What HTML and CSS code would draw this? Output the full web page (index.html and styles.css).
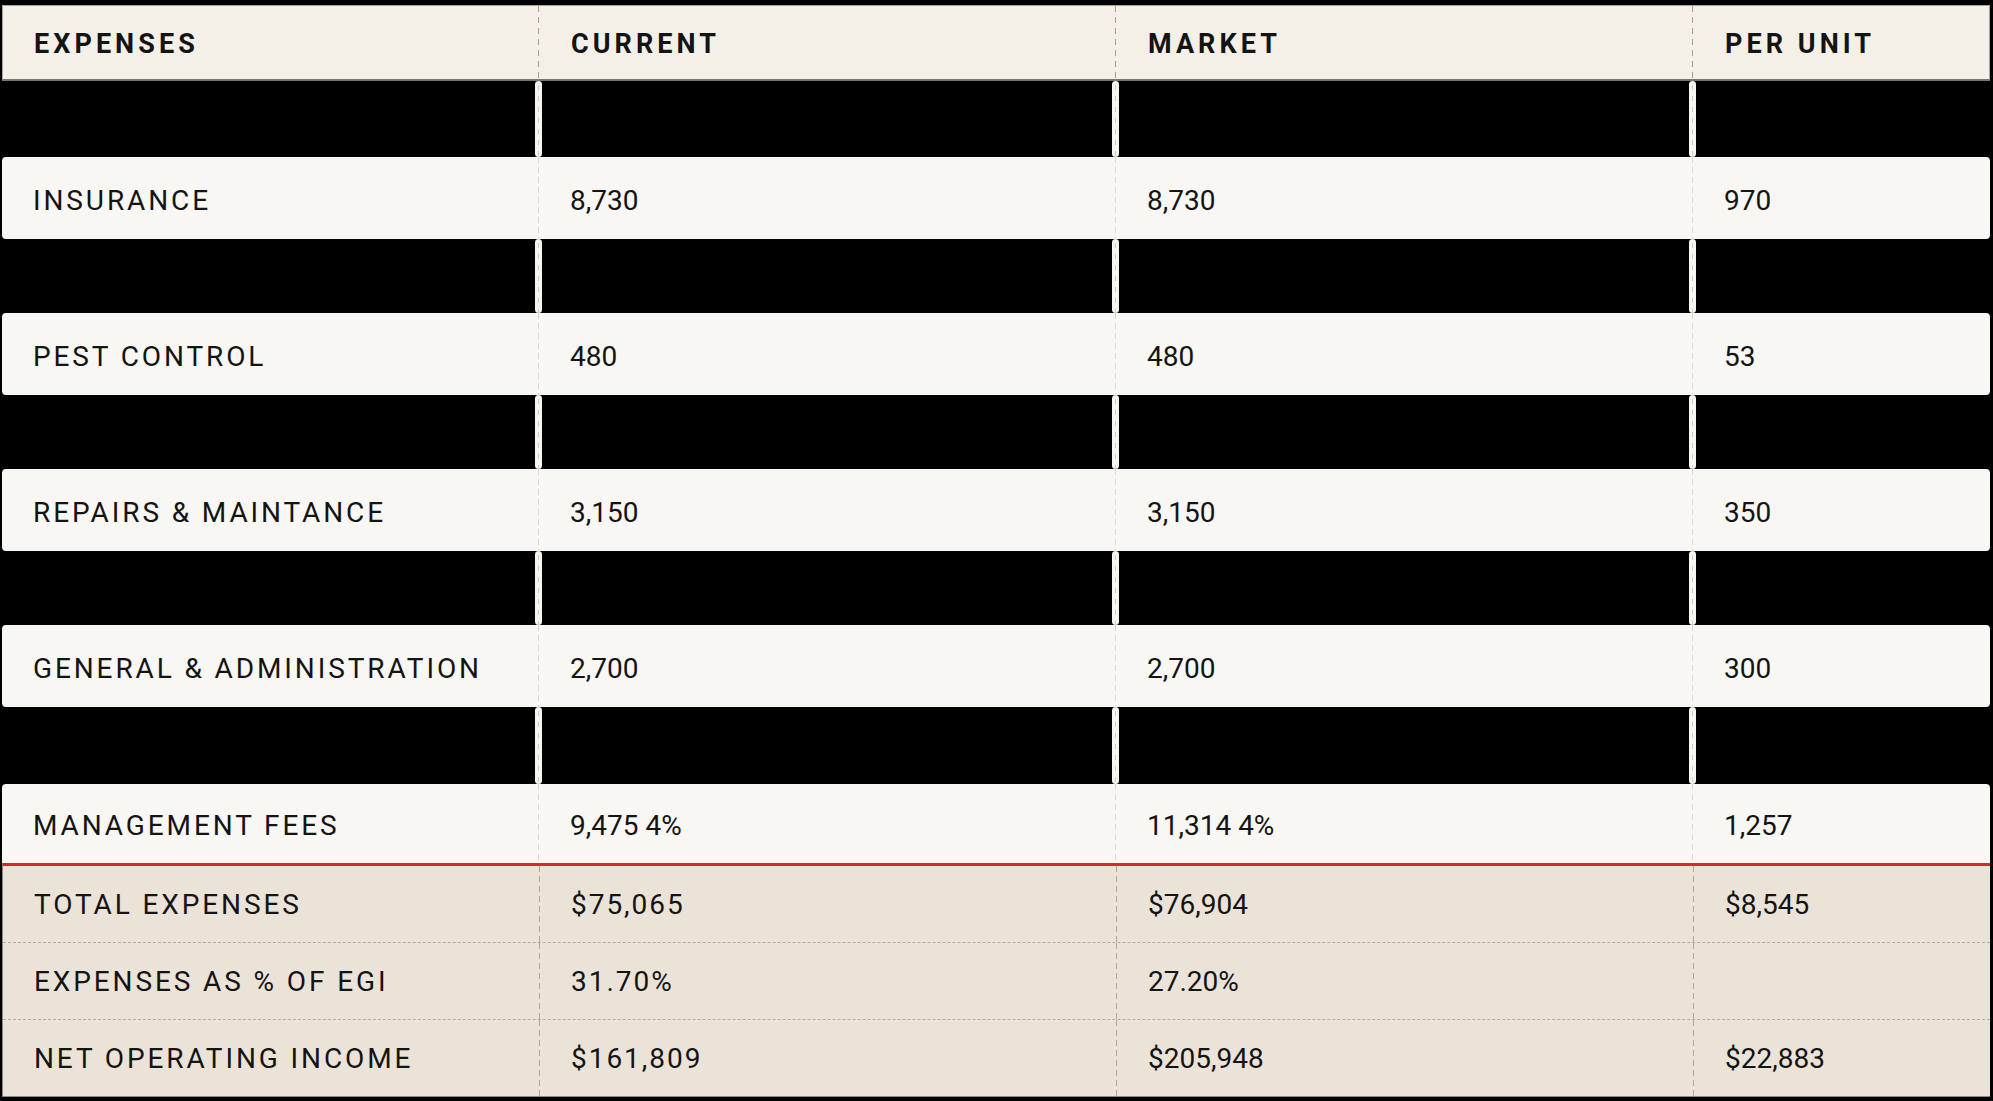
FILE: index.html
```html
<!DOCTYPE html>
<html lang="en">
<head>
<meta charset="utf-8">
<title>Expenses</title>
<link rel="stylesheet" href="styles.css">
</head>
<body>
<div class="sheet">
  <div class="row head">
    <div class="cell">EXPENSES</div>
    <div class="cell">CURRENT</div>
    <div class="cell">MARKET</div>
    <div class="cell">PER UNIT</div>
  </div>
  <div class="gap first"><div class="g"></div><div class="g"></div><div class="g"></div><div class="g"></div></div>
  <div class="row item">
    <div class="cell label">INSURANCE</div>
    <div class="cell">8,730</div>
    <div class="cell">8,730</div>
    <div class="cell">970</div>
  </div>
  <div class="gap"><div class="g"></div><div class="g"></div><div class="g"></div><div class="g"></div></div>
  <div class="row item">
    <div class="cell label">PEST CONTROL</div>
    <div class="cell">480</div>
    <div class="cell">480</div>
    <div class="cell">53</div>
  </div>
  <div class="gap"><div class="g"></div><div class="g"></div><div class="g"></div><div class="g"></div></div>
  <div class="row item">
    <div class="cell label">REPAIRS &amp; MAINTANCE</div>
    <div class="cell">3,150</div>
    <div class="cell">3,150</div>
    <div class="cell">350</div>
  </div>
  <div class="gap"><div class="g"></div><div class="g"></div><div class="g"></div><div class="g"></div></div>
  <div class="row item">
    <div class="cell label">GENERAL &amp; ADMINISTRATION</div>
    <div class="cell">2,700</div>
    <div class="cell">2,700</div>
    <div class="cell">300</div>
  </div>
  <div class="gap last"><div class="g"></div><div class="g"></div><div class="g"></div><div class="g"></div></div>
  <div class="row item mgmt">
    <div class="cell label">MANAGEMENT FEES</div>
    <div class="cell">9,475 4%</div>
    <div class="cell">11,314 4%</div>
    <div class="cell">1,257</div>
  </div>
  <div class="totals">
    <div class="row total">
      <div class="cell label">TOTAL EXPENSES</div>
      <div class="cell spaced">$75,065</div>
      <div class="cell">$76,904</div>
      <div class="cell">$8,545</div>
    </div>
    <div class="row total">
      <div class="cell label">EXPENSES AS % OF EGI</div>
      <div class="cell spaced">31.70%</div>
      <div class="cell">27.20%</div>
      <div class="cell"></div>
    </div>
    <div class="row total">
      <div class="cell label">NET OPERATING INCOME</div>
      <div class="cell spaced">$161,809</div>
      <div class="cell">$205,948</div>
      <div class="cell">$22,883</div>
    </div>
  </div>
</div>
</body>
</html>
```

FILE: styles.css
```css
* { box-sizing: border-box; }

html, body {
  margin: 0;
  background: #000;
}

body {
  font-family: Roboto, "Liberation Sans", sans-serif;
  color: #141414;
}

.sheet {
  margin: 5px 3px 5px 2px;
  display: flex;
  flex-direction: column;
}

.row,
.gap {
  display: grid;
  grid-template-columns: 536px 577px 577px 1fr;
}

.cell {
  position: relative;
  display: flex;
  align-items: center;
  padding: 4px 0 0 31px;
  font-size: 28px;
  white-space: nowrap;
}

.cell + .cell {
  padding-left: 32px;
}

.cell + .cell::before {
  content: "";
  position: absolute;
  left: 0;
  top: 0;
  bottom: 0;
  width: 1px;
  background: repeating-linear-gradient(to bottom, #dcd7cd 0 6px, transparent 6px 10px);
}

.label {
  letter-spacing: 0.103em;
}

.spaced {
  letter-spacing: 0.07em;
}

/* header */
.head {
  height: 76px;
  background: #f4f0e8;
  border: 1px solid #a8a39b;
  border-bottom: 2px solid #79746d;
}

.head .cell {
  font-size: 27px;
  font-weight: 700;
  letter-spacing: 0.15em;
  padding-top: 3px;
}

.head .cell + .cell::before {
  left: -1px;
  background: repeating-linear-gradient(to bottom, #a59d92 0 6px, transparent 6px 11px);
}

/* black spacer rows with divider bars */
.gap {
  height: 74px;
}

.gap.first {
  height: 76px;
}

.gap.last {
  height: 77px;
}

.g {
  position: relative;
}

.g + .g::before {
  content: "";
  position: absolute;
  left: -3px;
  top: 0;
  bottom: 0;
  width: 7px;
  border-radius: 4px;
  background: #f7f5f0;
}

.g + .g::after {
  content: "";
  position: absolute;
  left: 0;
  top: 4px;
  bottom: 0;
  width: 1px;
  background: repeating-linear-gradient(to bottom, #d6ccbc 0 5px, transparent 5px 11px);
}

/* white item rows */
.item {
  height: 82px;
  background: #f8f7f3;
  border-radius: 4px;
}

.mgmt {
  height: 79px;
  border-radius: 4px 4px 0 0;
}

/* totals */
.totals {
  border-top: 3px solid #d9272f;
  border-left: 1px solid #8d877f;
  border-bottom: 1px solid #8d877f;
  background: #ebe3d8;
}

.total {
  height: 77px;
}

.total:first-child {
  height: 76px;
}

.total .cell {
  padding-top: 0;
}

.total + .total {
  border-top: 1px dashed #b7ac9c;
}

.total .cell + .cell::before {
  background: repeating-linear-gradient(to bottom, #b3a896 0 6px, transparent 6px 10px);
}
```
